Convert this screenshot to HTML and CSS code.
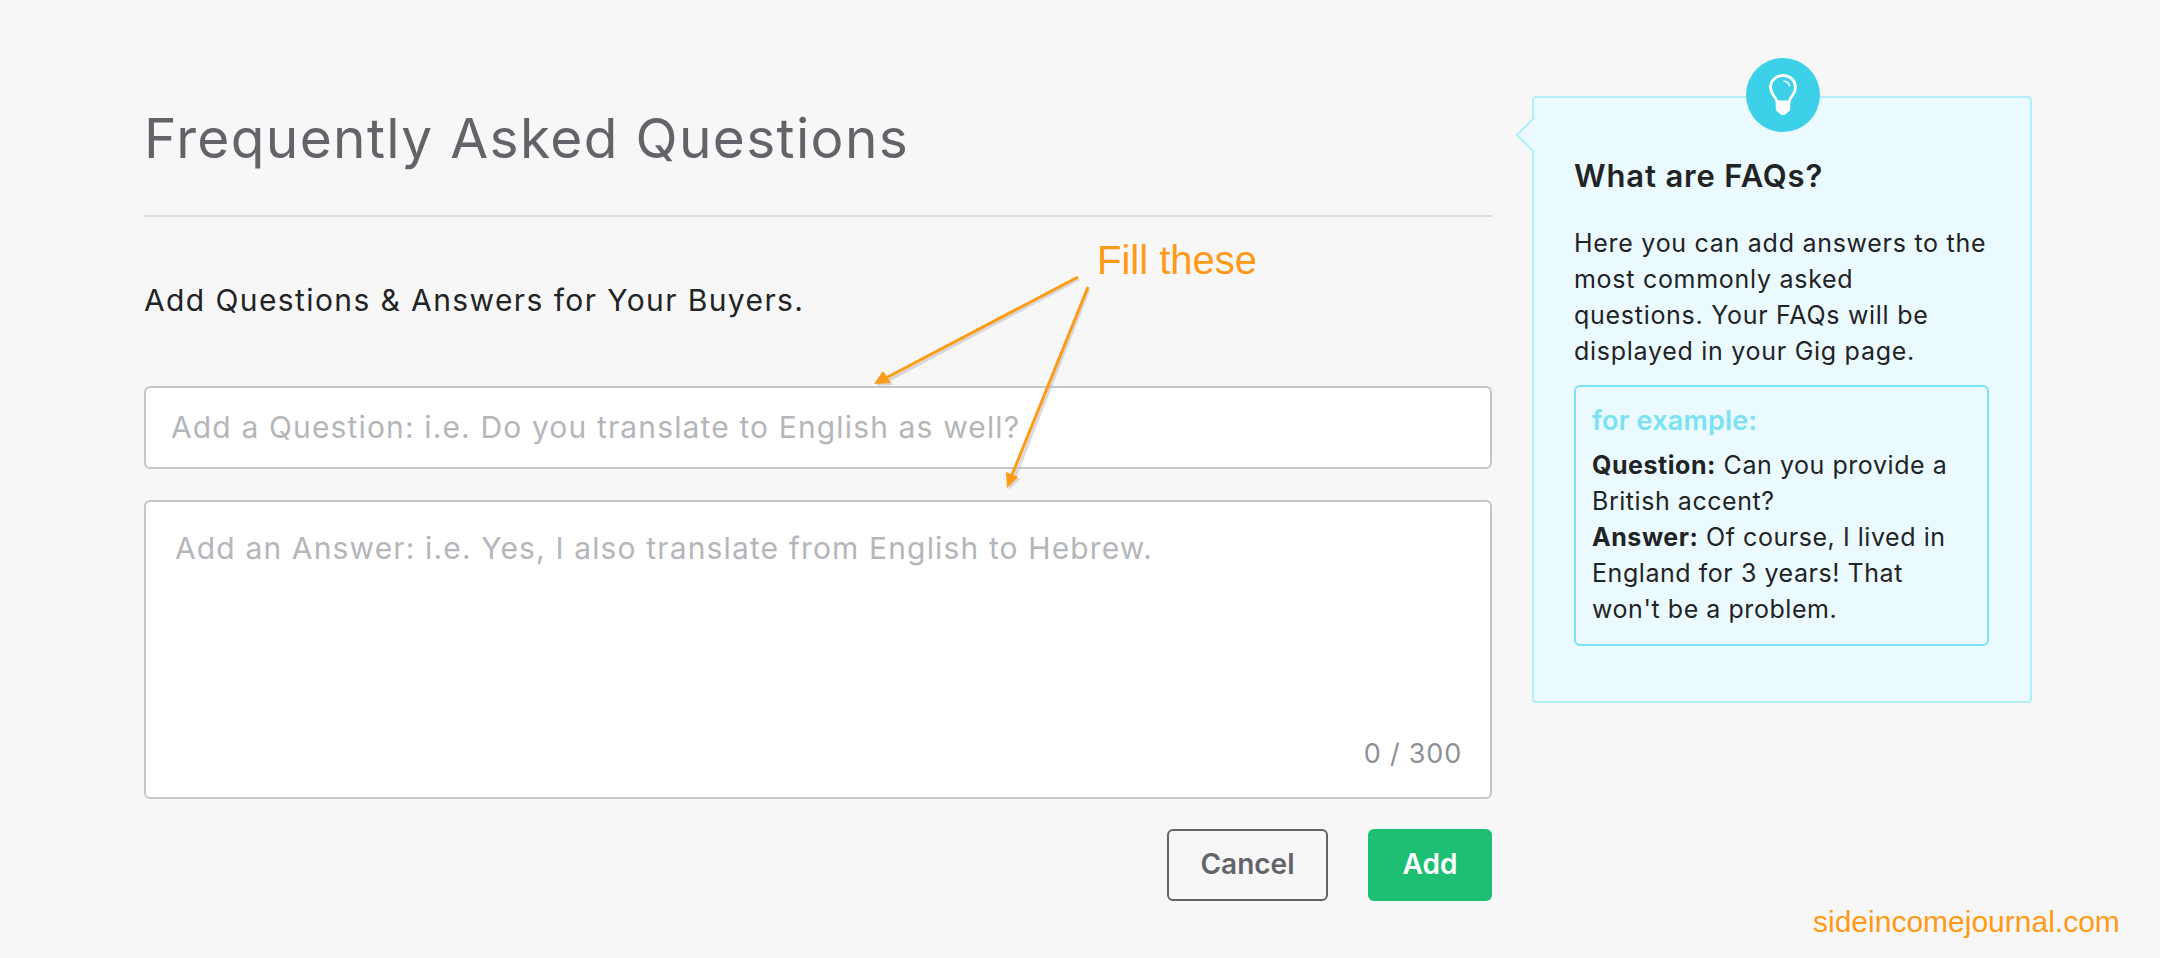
FILE: index.html
```html
<!DOCTYPE html>
<html lang="en">
<head>
<meta charset="utf-8">
<title>Frequently Asked Questions</title>
<link rel="stylesheet" href="styles.css">
</head>
<body>
<main class="page">
  <section class="form-col">
    <h1 class="title">Frequently Asked Questions</h1>
    <p class="subtitle">Add Questions &amp; Answers for Your Buyers.</p>
    <form class="faq-form">
      <input class="field question" type="text" placeholder="Add a Question: i.e. Do you translate to English as well?">
      <div class="answer-wrap">
        <textarea class="field answer" placeholder="Add an Answer: i.e. Yes, I also translate from English to Hebrew."></textarea>
        <span class="counter">0 / 300</span>
      </div>
      <div class="actions">
        <button class="btn btn-cancel" type="button">Cancel</button>
        <button class="btn btn-add" type="button">Add</button>
      </div>
    </form>
  </section>
  <aside class="tip">
    <span class="tip-icon">
      <svg viewBox="0 0 28 42" width="28" height="42" aria-hidden="true">
        <path d="M14 1.500C6.800 1.500 1.500 6.900 1.500 13.300c0 3.400 1.400 6 3.100 8.200 1.600 2.100 3 4 3.400 6.500h12c.4-2.500 1.800-4.400 3.400-6.500 1.700-2.200 3.100-4.800 3.100-8.200C26.500 6.900 21.200 1.500 14 1.500z" fill="none" stroke="#fff" stroke-width="2.800"/>
        <path d="M6.800 27h14.400v8.300c0 1.400-.9 2.300-2.300 2.500-.8 2-2.700 3.200-4.900 3.200s-4.100-1.200-4.900-3.200c-1.400-.2-2.300-1.100-2.300-2.500z" fill="#fff"/>
        <path d="M14.500 7c3.300.3 5.600 2.300 6.300 5.200" fill="none" stroke="#fff" stroke-width="1.700"/>
      </svg>
    </span>
    <h2 class="tip-title">What are FAQs?</h2>
    <p class="tip-text">Here you can add answers to the<br>most commonly asked<br>questions. Your FAQs will be<br>displayed in your Gig page.</p>
    <div class="example">
      <h3 class="example-title">for example:</h3>
      <p class="example-text"><b>Question:</b> Can you provide a British accent?<br><b>Answer:</b> Of course, I lived in England for 3 years! That won't be a problem.</p>
    </div>
  </aside>
</main>
<div class="callout">Fill these</div>
<svg class="arrows" viewBox="0 0 2160 958" width="2160" height="958" aria-hidden="true">
  <g class="arrow-shadow">
    <path d="M1079 279L889 380" stroke-width="3"/><path d="M876 386L885 373L893 385Z"/>
    <path d="M1089 289L1015 477" stroke-width="3"/><path d="M1009 490L1008 474L1020 479Z"/>
  </g>
  <g class="arrow">
    <path d="M1078 277L886 378" stroke-width="3"/><path d="M874 384L883 371L891 383Z"/>
    <path d="M1088 287L1012 475" stroke-width="3"/><path d="M1007 488L1006 472L1018 477Z"/>
  </g>
</svg>
<div class="watermark">sideincomejournal.com</div>
</body>
</html>
```
FILE: styles.css
```css
* { box-sizing: border-box; }
html, body { margin: 0; height: 100%; }
body {
  position: relative;
  width: 2160px;
  height: 958px;
  overflow: hidden;
  background: #f7f7f7;
  font-family: Inter, "Liberation Sans", sans-serif;
  color: #222325;
}
.page { display: flex; align-items: flex-start; gap: 40px; padding: 0 0 0 144px; }
.form-col { width: 1348px; flex: none; }
.title {
  margin: 0;
  padding-top: 103px;
  height: 217px;
  font-size: 55px;
  line-height: 70px;
  font-weight: 400;
  letter-spacing: 1.35px;
  color: #62646a;
  border-bottom: 2px solid #dcdcde;
}
.subtitle {
  margin: 0;
  padding-top: 63px;
  height: 169px;
  font-size: 30px;
  line-height: 40px;
  letter-spacing: 1.4px;
  color: #222325;
}
.faq-form { display: flex; flex-direction: column; }
.field {
  display: block;
  width: 100%;
  background: #fff;
  border: 2px solid #c5c6c9;
  border-radius: 6px;
  font: inherit;
  font-size: 30px;
  letter-spacing: 1.14px;
  color: #222325;
  outline: 0;
}
.field::placeholder { color: #b5b6ba; opacity: 1; }
.question { height: 83px; padding: 0 25px 2px; }
.answer-wrap { position: relative; margin-top: 31px; height: 299px; }
.answer { height: 100%; padding: 28px 29px; resize: none; }
.counter {
  position: absolute;
  right: 30px;
  bottom: 27px;
  font-size: 27px;
  line-height: 36px;
  letter-spacing: .8px;
  color: #8e9095;
}
.actions { display: flex; justify-content: flex-end; gap: 40px; margin-top: 30px; }
.btn {
  height: 72px;
  border-radius: 6px;
  font: inherit;
  font-size: 28px;
  font-weight: 600;
  padding: 0 0 2px;
}
.btn-cancel { width: 161px; background: transparent; border: 2px solid #62646a; color: #62646a; }
.btn-add { width: 124px; background: #1dbf73; border: 0; color: #fff; }
.tip {
  position: relative;
  flex: none;
  width: 500px;
  height: 607px;
  margin-top: 96px;
  padding: 58px 40px 0;
  background: #ebfaff;
  border: 2px solid #b1eff9;
  border-radius: 4px;
}
.tip::before {
  content: "";
  position: absolute;
  left: -13px;
  top: 24px;
  width: 24px;
  height: 24px;
  background: #ebfaff;
  border-left: 2px solid #b1eff9;
  border-bottom: 2px solid #b1eff9;
  transform: rotate(45deg);
}
.tip-icon {
  position: absolute;
  left: 212px;
  top: -40px;
  width: 74px;
  height: 74px;
  border-radius: 50%;
  background: #3dd1e9;
  display: flex;
  align-items: center;
  justify-content: center;
}
.tip-title { margin: 0; font-size: 31px; line-height: 40px; font-weight: 600; letter-spacing: .85px; color: #222325; }
.tip-text { margin: 29px 0 0; font-size: 25px; line-height: 36px; letter-spacing: .72px; white-space: nowrap; }
.example {
  margin-top: 16px;
  width: 415px;
  height: 261px;
  padding: 16px 16px 0;
  border: 2px solid #7ae2f2;
  border-radius: 6px;
}
.example-title { margin: 0; font-size: 27px; line-height: 36px; font-weight: 600; letter-spacing: .2px; color: #7ae2f2; }
.example-text { margin: 8px 0 0; font-size: 25px; line-height: 36px; letter-spacing: .55px; }
.example-text b { font-weight: 700; }
.callout {
  position: absolute;
  left: 1097px;
  top: 238px;
  font-family: "Liberation Sans", Arial, sans-serif;
  font-size: 40px;
  line-height: 44px;
  color: #ff9a17;
}
.arrows { position: absolute; left: 0; top: 0; pointer-events: none; }
.arrow path { stroke: #ff9a17; fill: #ff9a17; }
.arrow path:nth-child(even) { stroke: none; }
.arrow-shadow path { stroke: #bdbdbd; fill: #bdbdbd; opacity: .55; }
.arrow-shadow path:nth-child(even) { stroke: none; }
.watermark {
  position: absolute;
  left: 1813px;
  top: 904px;
  font-family: "Liberation Sans", Arial, sans-serif;
  font-size: 30px;
  line-height: 36px;
  color: #ff9a17;
}
```
